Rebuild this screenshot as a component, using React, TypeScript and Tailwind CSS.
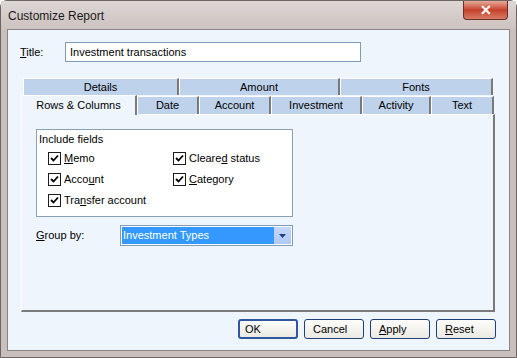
import React from "react";

const font = { fontFamily: '"Liberation Sans", Arial, sans-serif' };

const Mn = ({ children }: { children: React.ReactNode }) => <span className="underline underline-offset-[1px]">{children}</span>;

const TopTab = ({ label, w }: { label: string; w: string }) => (
  <div className={`${w} h-full flex items-center justify-center bg-[#bed2ec] border-t border-l border-white border-r-2 border-r-[#7a7a7a]`}>
    {label}
  </div>
);

const BottomTab = ({ label, w }: { label: string; w: string }) => (
  <div className={`${w} h-[18px] flex items-center justify-center bg-[#bed2ec] border-t border-l border-white border-r-2 border-r-[#7a7a7a]`}>
    {label}
  </div>
);

const Check = ({ children }: { children: React.ReactNode }) => (
  <div className="flex items-center gap-[3px] h-[20px]">
    <div className="w-[13px] h-[13px] border border-[#1c1c1c] bg-white flex items-center justify-center">
      <svg width="9" height="9" viewBox="0 0 9 9">
        <path d="M1 4 L3.5 6.5 L8 1.5" fill="none" stroke="#000" strokeWidth="1.8" />
      </svg>
    </div>
    <span>{children}</span>
  </div>
);

const Btn = ({ children, def }: { children: React.ReactNode; def?: boolean }) => (
  <div
    className={`h-[20px] flex items-center rounded-[3px] bg-gradient-to-b from-[#fdfdfb] to-[#ebe9e2] ${
      def ? "border-2 border-[#2f57a0] pl-[5px] w-[60px]" : "border border-[#1e3f78] pl-[8px] w-[60px]"
    }`}
  >
    {children}
  </div>
);

export default function App() {
  return (
    <div className="w-[517px] h-[358px] bg-[#c9bfbd] rounded-t-[7px] border border-[#6e6462] flex flex-col text-[11px] text-black" style={font}>
      {/* Title bar */}
      <div className="h-[28px] flex items-start pl-[7px] pr-[8px] bg-gradient-to-b from-[#ddd6d4] to-[#cdc3c1]">
        <span className="text-[12px] mt-[6px] text-[#1a1a1a]">Customize Report</span>
        <div className="ml-auto w-[45px] h-[19px] rounded-b-[4px] border border-t-0 border-[#6a3028] bg-gradient-to-b from-[#e7a999] via-[#c5402c] to-[#d77a64] flex items-center justify-center">
          <span className="text-white font-bold text-[14px] leading-none">✕</span>
        </div>
      </div>

      {/* Client area */}
      <div className="ml-[6px] mr-[6px] h-[322px] border border-[#8c8382] bg-[#eef5fd] flex flex-col">
        {/* Title row */}
        <div className="flex items-center h-[20px] mt-[12px] pl-[12px]">
          <span className="w-[45px]">
            <Mn>T</Mn>itle:
          </span>
          <div className="w-[296px] h-[20px] border border-[#7f9db9] bg-white flex items-center pl-[4px]">
            Investment transactions
          </div>
        </div>

        {/* Tabs */}
        <div className="ml-[13px] mt-[16px] flex flex-col">
          <div className="flex h-[17px] ml-[2px]">
            <TopTab label="Details" w="w-[156px]" />
            <TopTab label="Amount" w="w-[161px]" />
            <TopTab label="Fonts" w="w-[153px]" />
          </div>
          <div className="flex items-end h-[19px]">
            <div className="w-[116px] h-[20px] -mb-[1px] relative z-10 flex items-center justify-center bg-[#eef5fd] border-t border-l border-white border-r-2 border-r-[#7a7a7a] pb-[1px]">
              Rows &amp; Columns
            </div>
            <BottomTab label="Date" w="w-[62px]" />
            <BottomTab label="Account" w="w-[72px]" />
            <BottomTab label="Investment" w="w-[91px]" />
            <BottomTab label="Activity" w="w-[69px]" />
            <BottomTab label="Text" w="w-[63px]" />
          </div>

          {/* Panel */}
          <div className="w-[474px] h-[198px] bg-[#eef5fd] border-t border-l border-white border-r-2 border-b-2 border-r-[#7a7a7a] border-b-[#7a7a7a] pl-[14px] pt-[14px] flex flex-col">
            <div className="w-[257px] h-[88px] border border-[#8aa0b4] bg-white pl-[2px] pt-[2px] flex flex-col">
              <span className="leading-[14px]">Include fields</span>
              <div className="flex mt-[2px] ml-[9px]">
                <div className="w-[125px] flex flex-col gap-[1px]">
                  <Check>
                    <Mn>M</Mn>emo
                  </Check>
                  <Check>
                    Acco<Mn>u</Mn>nt
                  </Check>
                  <Check>
                    Tra<Mn>n</Mn>sfer account
                  </Check>
                </div>
                <div className="flex flex-col gap-[1px]">
                  <Check>
                    Cleare<Mn>d</Mn> status
                  </Check>
                  <Check>
                    <Mn>C</Mn>ategory
                  </Check>
                </div>
              </div>
            </div>

            <div className="flex items-center mt-[8px] h-[21px]">
              <span className="w-[84px]">
                <Mn>G</Mn>roup by:
              </span>
              <div className="w-[173px] h-[21px] border border-[#7f9db9] bg-white flex p-[1px]">
                <div className="flex-1 bg-[#3399ff] text-white flex items-center pl-[1px]">Investment Types</div>
                <div className="w-[17px] bg-gradient-to-b from-[#c6d8fa] to-[#b0c8f4] flex items-center justify-center">
                  <svg width="7" height="4" viewBox="0 0 7 4">
                    <path d="M0 0 H7 L3.5 4 Z" fill="#1b3f8a" />
                  </svg>
                </div>
              </div>
            </div>
          </div>
        </div>

        {/* Buttons */}
        <div className="flex justify-end gap-[6px] mt-[7px] pr-[13px]">
          <Btn def>OK</Btn>
          <Btn>Cancel</Btn>
          <Btn>
            <Mn>A</Mn>pply
          </Btn>
          <Btn>
            <Mn>R</Mn>eset
          </Btn>
        </div>
      </div>
    </div>
  );
}
